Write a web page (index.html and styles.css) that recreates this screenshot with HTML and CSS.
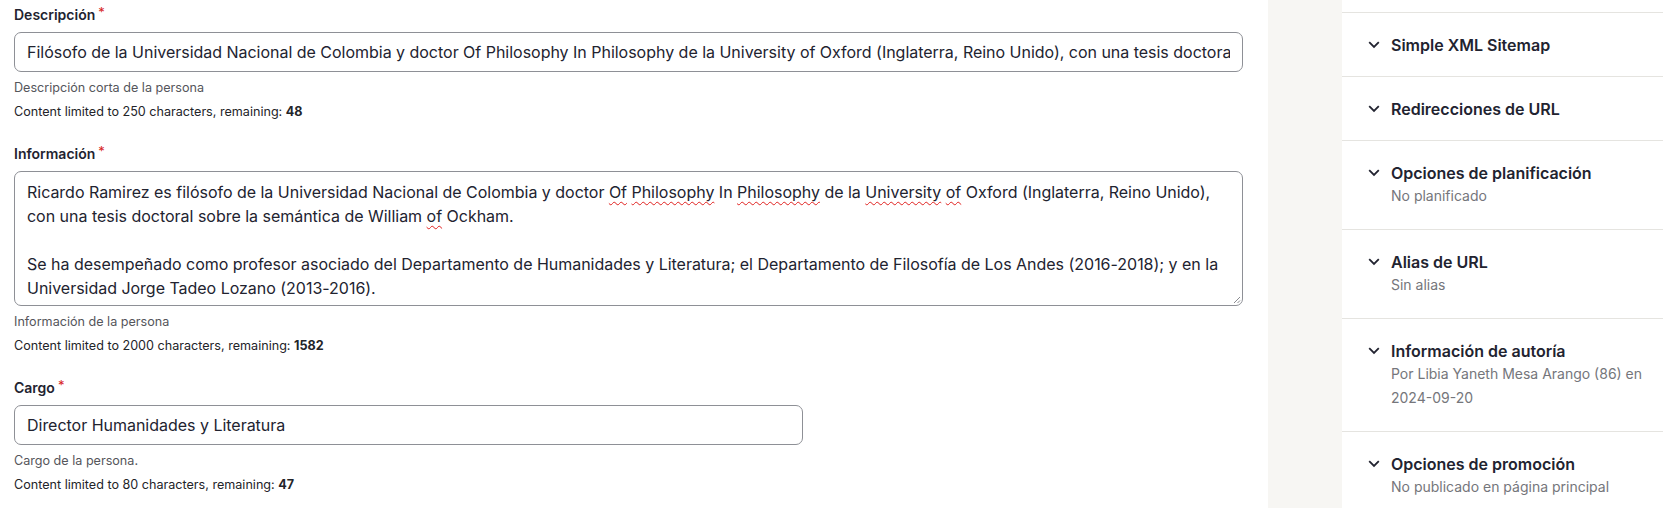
FILE: index.html
```html
<!DOCTYPE html>
<html lang="es">
<head>
<meta charset="utf-8">
<title>Editar persona</title>
<link rel="stylesheet" href="styles.css">
</head>
<body>
<div class="layout">
  <main class="main">
    <div class="form-item">
      <label class="label" for="desc">Descripción<span class="req">*</span></label>
      <input id="desc" class="input" type="text" value="Filósofo de la Universidad Nacional de Colombia y doctor Of Philosophy In Philosophy de la University of Oxford (Inglaterra, Reino Unido), con una tesis doctoral sobre la semántica de William of Ockham.">
      <div class="help">Descripción corta de la persona</div>
      <div class="counter">Content limited to 250 characters, remaining: <strong>48</strong></div>
    </div>

    <div class="form-item">
      <label class="label">Información<span class="req">*</span></label>
      <div class="textarea" role="textbox" aria-multiline="true">
        Ricardo Ramirez es filósofo de la Universidad Nacional de Colombia y doctor <span class="sp">Of</span> <span class="sp">Philosophy</span> In <span class="sp">Philosophy</span> de la <span class="sp">University</span> <span class="sp">of</span> Oxford (Inglaterra, Reino Unido),<br>
        con una tesis doctoral sobre la semántica de William <span class="sp">of</span> Ockham.<br>
        <br>
        Se ha desempeñado como profesor asociado del Departamento de Humanidades y Literatura; el Departamento de Filosofía de Los Andes (2016-2018); y en la<br>
        Universidad Jorge Tadeo Lozano (2013-2016).
        <svg class="grip" width="8" height="8" viewBox="0 0 8 8"><path d="M7 1 L1 7 M7 4.5 L4.5 7" stroke="#8a8b90" stroke-width="1" fill="none"/></svg>
      </div>
      <div class="help">Información de la persona</div>
      <div class="counter">Content limited to 2000 characters, remaining: <strong>1582</strong></div>
    </div>

    <div class="form-item">
      <label class="label" for="cargo">Cargo<span class="req">*</span></label>
      <input id="cargo" class="input input--short" type="text" value="Director Humanidades y Literatura">
      <div class="help">Cargo de la persona.</div>
      <div class="counter">Content limited to 80 characters, remaining: <strong>47</strong></div>
    </div>
  </main>

  <div class="gutter"></div>

  <aside class="sidebar">
    <div class="meta">
      <div class="meta-title"><svg class="chev" width="12" height="8" viewBox="0 0 12 8"><polyline points="1.2,1.2 6,6 10.8,1.2" fill="none" stroke="#222330" stroke-width="1.8"/></svg>Simple XML Sitemap</div>
    </div>
    <div class="meta">
      <div class="meta-title"><svg class="chev" width="12" height="8" viewBox="0 0 12 8"><polyline points="1.2,1.2 6,6 10.8,1.2" fill="none" stroke="#222330" stroke-width="1.8"/></svg>Redirecciones de URL</div>
    </div>
    <div class="meta">
      <div class="meta-title"><svg class="chev" width="12" height="8" viewBox="0 0 12 8"><polyline points="1.2,1.2 6,6 10.8,1.2" fill="none" stroke="#222330" stroke-width="1.8"/></svg>Opciones de planificación</div>
      <div class="meta-summary">No planificado</div>
    </div>
    <div class="meta">
      <div class="meta-title"><svg class="chev" width="12" height="8" viewBox="0 0 12 8"><polyline points="1.2,1.2 6,6 10.8,1.2" fill="none" stroke="#222330" stroke-width="1.8"/></svg>Alias de URL</div>
      <div class="meta-summary">Sin alias</div>
    </div>
    <div class="meta">
      <div class="meta-title"><svg class="chev" width="12" height="8" viewBox="0 0 12 8"><polyline points="1.2,1.2 6,6 10.8,1.2" fill="none" stroke="#222330" stroke-width="1.8"/></svg>Información de autoría</div>
      <div class="meta-summary">Por Libia Yaneth Mesa Arango (86) en<br>2024-09-20</div>
    </div>
    <div class="meta">
      <div class="meta-title"><svg class="chev" width="12" height="8" viewBox="0 0 12 8"><polyline points="1.2,1.2 6,6 10.8,1.2" fill="none" stroke="#222330" stroke-width="1.8"/></svg>Opciones de promoción</div>
      <div class="meta-summary">No publicado en página principal</div>
    </div>
  </aside>
</div>
</body>
</html>
```

FILE: styles.css
```css
* { box-sizing: border-box; }

html, body {
  margin: 0;
  padding: 0;
  height: 100%;
  overflow: hidden;
}

body {
  font-family: Inter, "Noto Sans", "Liberation Sans", sans-serif;
  color: #222330;
  background: #f7f6f3;
}

.layout {
  display: flex;
  height: 100%;
}

.main {
  width: 1268px;
  flex: none;
  background: #fff;
  padding: 5px 25px 0 14px;
}

.gutter {
  width: 74px;
  flex: none;
  background: #f7f6f3;
}

.sidebar {
  flex: 1;
  background: #fff;
  padding-top: 12px;
}

/* form */
.form-item {
  margin-bottom: 24px;
}

.label {
  display: block;
  font-size: 14px;
  font-weight: 600;
  line-height: 20px;
  margin-bottom: 7px;
  color: #222330;
}

.req {
  color: #d72222;
  font-size: 13px;
  font-weight: 400;
  margin-left: 3px;
  vertical-align: top;
  line-height: 14px;
}

.input {
  display: block;
  width: 100%;
  height: 40px;
  padding: 0 12px;
  border: 1px solid #8e9096;
  border-radius: 7px;
  font-family: inherit;
  font-size: 16px;
  letter-spacing: -0.02px;
  color: #222330;
  background: #fff;
  outline: none;
}

.input--short {
  width: 789px;
}

.textarea {
  position: relative;
  width: 100%;
  height: 135px;
  padding: 8px 12px 5px;
  border: 1px solid #8e9096;
  border-radius: 7px;
  font-size: 16px;
  line-height: 24px;
  letter-spacing: -0.02px;
  white-space: nowrap;
  overflow: hidden;
  background: #fff;
}

.sp {
  text-decoration: underline wavy #e0211f;
  text-decoration-thickness: 1px;
  text-underline-offset: 3px;
}

.grip {
  position: absolute;
  right: 1px;
  bottom: 1px;
}

.help {
  margin-top: 8px;
  font-size: 12.6px;
  line-height: 16px;
  color: #55565b;
}

.counter {
  margin-top: 8px;
  font-size: 12.6px;
  line-height: 16px;
  color: #232429;
}

.counter strong {
  font-weight: 700;
}

/* sidebar */
.meta {
  border-top: 1px solid #e5e4e0;
  padding: 22px 20px 21px 26px;
}

.meta-title {
  display: flex;
  align-items: center;
  font-size: 16px;
  font-weight: 600;
  line-height: 20px;
  color: #222330;
}

.chev {
  flex: none;
  margin-right: 11px;
}

.meta-summary {
  margin-top: 1px;
  padding-left: 23px;
  font-size: 14px;
  line-height: 24px;
  color: #75767b;
}
```
